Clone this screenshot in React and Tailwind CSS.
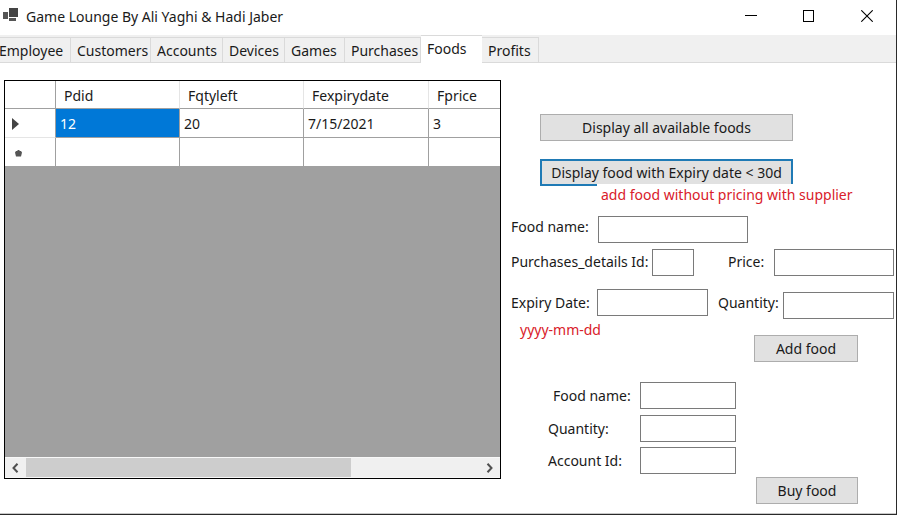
import React from "react";

const TABS = [
  { name: "Employee", width: "w-[78px] -ml-[7px]" },
  { name: "Customers", width: "w-20" },
  { name: "Accounts", width: "w-[72px]" },
  { name: "Devices", width: "w-[62px]" },
  { name: "Games", width: "w-[60px]" },
  { name: "Purchases", width: "w-[76px]" },
  { name: "Foods", width: "w-[61px]", active: true },
  { name: "Profits", width: "w-[57px]" },
];

const COLUMNS = ["Pdid", "Fqtyleft", "Fexpirydate", "Fprice"];

function TitleBar() {
  return (
    <header className="flex h-[35px] shrink-0 items-center bg-white pl-[3px]">
      <svg width="16" height="16" viewBox="0 0 16 16" className="mr-[7px] mb-1" aria-hidden="true">
        <rect x="0" y="4" width="5" height="7" fill="#555" />
        <rect x="6" y="0" width="9" height="9" fill="#444" />
        <rect x="6" y="10" width="7" height="3" fill="#555" />
      </svg>
      <h1 className="mb-[2px] flex-1 whitespace-nowrap text-sm">Game Lounge By Ali Yaghi &amp; Hadi Jaber</h1>
      <button aria-label="Minimize" className="mb-1 flex h-6 w-[58px] items-center justify-center">
        <svg width="12" height="12" viewBox="0 0 12 12" stroke="#000" shapeRendering="crispEdges">
          <path d="M0 5.5h12" />
        </svg>
      </button>
      <button aria-label="Maximize" className="mb-1 flex h-6 w-[58px] items-center justify-center">
        <svg width="12" height="12" viewBox="0 0 12 12" fill="none" stroke="#000" shapeRendering="crispEdges">
          <path d="M.5 .5h10v11h-10z" />
        </svg>
      </button>
      <button aria-label="Close" className="mb-1 flex h-6 w-[58px] items-center justify-center">
        <svg width="12" height="12" viewBox="0 0 12 12" fill="none" stroke="#000" strokeWidth="1.1">
          <path d="M.3 .3l11.4 11.4M11.7 .3L.3 11.7" />
        </svg>
      </button>
    </header>
  );
}

function TabStrip() {
  return (
    <nav role="tablist" className="flex h-7 shrink-0 items-end overflow-hidden bg-[#f0f0f0] shadow-[inset_0_-1px_0_#dadada]">
      {TABS.map((tab) => (
        <button
          key={tab.name}
          role="tab"
          aria-selected={!!tab.active}
          className={`${tab.width} shrink-0 whitespace-nowrap pl-[6px] text-left text-sm ${
            tab.active
              ? "h-7 border-t border-[#dadada] bg-white pb-px"
              : "h-[26px] border border-l-0 border-[#dadada] bg-[#f0f0f0] pt-[2px]"
          }`}
        >
          {tab.name}
        </button>
      ))}
    </nav>
  );
}

function DataGrid() {
  const line = "border-r border-b border-[#a0a0a0]";
  return (
    <section className="flex min-w-0 flex-1 flex-col border border-black bg-[#a0a0a0]">
      <table className="w-full table-fixed border-separate border-spacing-0 bg-white text-left text-sm">
        <colgroup>
          <col className="w-[51px]" />
          <col className="w-[124px]" />
          <col className="w-[124px]" />
          <col className="w-[125px]" />
          <col />
        </colgroup>
        <thead>
          <tr className="h-7">
            <th className={`${line} p-0`} aria-label="Row"></th>
            {COLUMNS.map((name) => (
              <th
                key={name}
                className="border-r border-b border-r-[#e5e5e5] border-b-[#a0a0a0] p-0 pt-[2px] pl-2 font-normal last:border-r-0"
              >
                {name}
              </th>
            ))}
          </tr>
        </thead>
        <tbody>
          <tr className="h-[29px]">
            <td className="border-r border-b border-r-[#a0a0a0] border-b-[#e5e5e5] p-0 pt-[2px] pl-[7px]">
              <svg width="7" height="12" viewBox="0 0 7 12" fill="#444" aria-hidden="true">
                <path d="M0 0l7 6-7 6z" />
              </svg>
            </td>
            <td className={`${line} bg-[#0078d7] p-0 pt-[2px] pl-1 text-white`}>12</td>
            <td className={`${line} p-0 pt-[2px] pl-1`}>20</td>
            <td className={`${line} p-0 pt-[2px] pl-1`}>7/15/2021</td>
            <td className="border-b border-[#a0a0a0] p-0 pt-[2px] pl-1">3</td>
          </tr>
          <tr className="h-[29px]">
            <td className={`${line} p-0 pt-[2px] pl-[10px]`}>
              <svg width="7" height="7" viewBox="0 0 7 7" fill="#555" aria-hidden="true">
                <path d="M2.500 0h2v1H6l1 1.500L6.500 4.500 6 6.500H1L.5 4.500 0 2.500 1 1h1.500z" />
              </svg>
            </td>
            <td className={line}></td>
            <td className={line}></td>
            <td className={line}></td>
            <td className="border-b border-[#a0a0a0]"></td>
          </tr>
        </tbody>
      </table>
      <div className="mt-auto flex h-[21px] border-y border-[#f8f8f8] bg-[#f0f0f0]">
        <button aria-label="Scroll left" className="flex w-[21px] shrink-0 items-center justify-center">
          <svg width="8" height="10" viewBox="0 0 8 10" fill="none" stroke="#505050" strokeWidth="2">
            <path d="M5.500 .8L1.500 5l4 4.200" />
          </svg>
        </button>
        <div className="flex-1">
          <div className="h-full w-[72%] bg-[#cdcdcd]"></div>
        </div>
        <button aria-label="Scroll right" className="flex w-[23px] shrink-0 items-center justify-center">
          <svg width="8" height="10" viewBox="0 0 8 10" fill="none" stroke="#505050" strokeWidth="2">
            <path d="M2.500 .8L6.500 5l-4 4.200" />
          </svg>
        </button>
      </div>
    </section>
  );
}

function PushButton({ className, children }) {
  return (
    <button className={`h-[27px] whitespace-nowrap bg-[#e1e1e1] text-center text-sm ${className}`}>
      {children}
    </button>
  );
}

function TextBox({ id, className }) {
  return <input id={id} type="text" className={`h-[27px] min-w-0 border border-[#7a7a7a] bg-white px-1 text-sm ${className}`} />;
}

function Label({ htmlFor, className, children }) {
  return (
    <label htmlFor={htmlFor} className={`shrink-0 whitespace-nowrap text-sm ${className}`}>
      {children}
    </label>
  );
}

function FoodForms() {
  return (
    <section className="flex w-[393px] shrink-0 flex-col items-start pt-[34px] pl-[10px]">
      <PushButton className="ml-[29px] w-[253px] border border-[#adadad]">Display all available foods</PushButton>
      <PushButton className="mt-[18px] ml-[29px] w-[253px] border-2 border-[#1f7ab5]">
        Display food with Expiry date &lt; 30d
      </PushButton>
      <p className="-mt-[2px] ml-[86px] h-6 whitespace-nowrap bg-white pl-1 text-sm leading-[22px] text-[#d9202a]">
        add food without pricing with supplier
      </p>

      <form className="mt-2 flex w-full flex-col" onSubmit={(e) => e.preventDefault()}>
        <div className="flex items-center">
          <Label htmlFor="add-name" className="w-[87px] pb-[6px]">Food name:</Label>
          <TextBox id="add-name" className="w-[150px]" />
        </div>
        <div className="mt-[6px] flex items-center">
          <Label htmlFor="add-purchase" className="w-[141px] pb-[2px]">Purchases_details Id:</Label>
          <TextBox id="add-purchase" className="w-[42px]" />
          <Label htmlFor="add-price" className="ml-[34px] w-[46px] pb-[2px]">Price:</Label>
          <TextBox id="add-price" className="flex-1" />
        </div>
        <div className="mt-[13px] flex items-start">
          <Label htmlFor="add-expiry" className="w-[86px] pt-1">Expiry Date:</Label>
          <TextBox id="add-expiry" className="w-[111px]" />
          <Label htmlFor="add-quantity" className="ml-[10px] w-[65px] pt-1">Quantity:</Label>
          <TextBox id="add-quantity" className="mt-[3px] flex-1" />
        </div>
        <div className="flex items-start justify-between pr-9">
          <span className="pl-[9px] text-sm leading-[22px] text-[#d9202a]">yyyy-mm-dd</span>
          <PushButton className="mt-4 w-[104px] border border-[#adadad]">Add food</PushButton>
        </div>
      </form>

      <form className="mt-5 flex w-full flex-col pr-9 pl-[37px]" onSubmit={(e) => e.preventDefault()}>
        <div className="flex items-center">
          <Label htmlFor="buy-name" className="w-[92px] pl-[5px]">Food name:</Label>
          <TextBox id="buy-name" className="w-24" />
        </div>
        <div className="mt-[6px] flex items-center">
          <Label htmlFor="buy-quantity" className="w-[92px]">Quantity:</Label>
          <TextBox id="buy-quantity" className="w-24" />
        </div>
        <div className="mt-[5px] flex items-center">
          <Label htmlFor="buy-account" className="w-[92px]">Account Id:</Label>
          <TextBox id="buy-account" className="w-24" />
        </div>
        <PushButton className="mt-[3px] w-[102px] self-end border border-[#adadad]">Buy food</PushButton>
      </form>
    </section>
  );
}

export default function App() {
  return (
    <div className="flex min-h-screen flex-col border-r border-b border-[#2a2a2a] bg-white font-['Noto_Sans','Open_Sans',sans-serif] text-[#1a1a1a]">
      <TitleBar />
      <TabStrip />
      <main className="flex flex-1 border-b border-[#c8c8c8] pr-[2px] pb-2 pl-1">
        <div className="flex min-w-0 flex-1 pt-[17px] pb-[26px]">
          <DataGrid />
        </div>
        <div className="pt-[17px]">
          <FoodForms />
        </div>
      </main>
    </div>
  );
}
